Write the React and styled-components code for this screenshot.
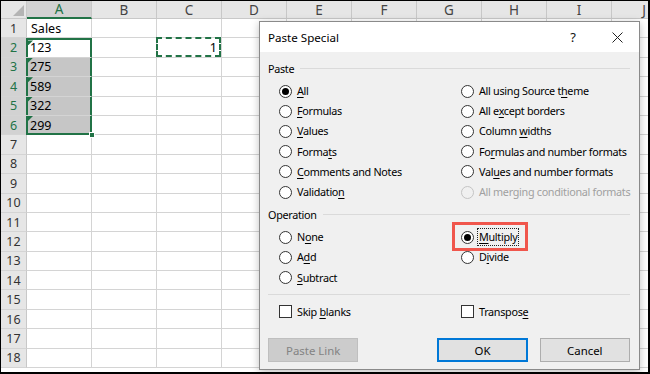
import styled, { createGlobalStyle, css } from "styled-components";

const GlobalStyle = createGlobalStyle`
  html, body {
    margin: 0;
    padding: 0;
    background: #fff;
  }
  * { box-sizing: border-box; }
`

const Screen = styled.div`
  position: relative;
  width: 650px;
  height: 374px;
  overflow: hidden;
  border: 1px solid #000;
  border-right-width: 2px;
  border-bottom-width: 2px;
  background: #fff;
  font-family: "Noto Sans", "Open Sans", sans-serif;
`

/* ---------- sheet ---------- */

const Sheet = styled.div`
  display: grid;
  grid-template-columns: 26px repeat(10, 65px);
  grid-template-rows: 18px;
  grid-auto-rows: 19.4px;
`

const Corner = styled.div`
  position: relative;
  background: #e6e6e6;
  border-right: 1px solid #c8c8c8;
  border-bottom: 1px solid #c8c8c8;
  &::after{
    content: "";
    position: absolute;
    right: 2px;
    bottom: 2px;
    width: 11px;
    height: 11px;
    background: #b4b4b4;
    clip-path: polygon(100% 0, 100% 100%, 0 100%);
  }
`

const ColHead = styled.div`
  display: flex;
  align-items: center;
  justify-content: center;
  font-size: 13.5px;
  color: #444;
  background: #e6e6e6;
  border-right: 1px solid #c8c8c8;
  border-bottom: 1px solid #c8c8c8;
  ${p => p.$active && css`
    background: #d2d2d2;
    color: #217346;
    border-bottom: 2px solid #217346;
  `}
`

const RowHead = styled.div`
  display: flex;
  align-items: center;
  justify-content: center;
  font-size: 12.5px;
  color: #333;
  background: #e6e6e6;
  border-right: 1px solid #c8c8c8;
  border-bottom: 1px solid #d4d4d4;
  ${p => p.$active && css`
    background: #d2d2d2;
    color: #217346;
  `}
`

const Cell = styled.div`
  position: relative;
  display: flex;
  align-items: center;
  justify-content: ${p => p.$right ? "flex-end" : "flex-start"};
  padding: 0 4px;
  font-size: 12.5px;
  color: #000;
  background: ${p => p.$shade ? "#c6c6c6" : "#fff"};
  border-right: 1px solid #d4d4d4;
  border-bottom: 1px solid #d4d4d4;
  ${p => p.$sel && css`
    margin-left: -1px;
    box-shadow:
      inset 2px 0 0 #217346,
      inset -1px 0 0 #217346
      ${p.$sel === "top" ? ", inset 0 2px 0 #217346" : ""}
      ${p.$sel === "bottom" ? ", inset 0 -1px 0 #217346" : ""};
    border-right-color: #217346;
    ${p.$sel === "bottom" ? "border-bottom-color: #217346;" : ""}
  `}
  ${p => p.$marquee && css`
    &::before{
      content: "";
      position: absolute;
      inset: -1px 0 0 -1px;
      border: 2px dashed #217346;
    }
  `}
  ${p => p.$flag && css`
    &::after{
      content: "";
      position: absolute;
      left: 2px;
      top: ${p.$sel === "top" ? "2px" : "0"};
      width: 5px;
      height: 5px;
      background: #1e7145;
      clip-path: polygon(0 0, 100% 0, 0 100%);
    }
  `}
`

const FillHandle = styled.span`
  position: absolute;
  right: -4px;
  bottom: -4px;
  width: 6px;
  height: 6px;
  background: #217346;
  border: 1px solid #fff;
  z-index: 2;
`

/* ---------- dialog ---------- */

const Dialog = styled.section`
  position: absolute;
  left: 258px;
  top: 20px;
  width: 381px;
  height: 349px;
  display: flex;
  flex-direction: column;
  background: #f0f0f0;
  border: 1px solid #8a8a8a;
  box-shadow: 0 2px 8px rgba(0,0,0,0.25);
  font-family: "Noto Sans", "Open Sans", sans-serif;
  font-size: 10.8px;
  letter-spacing: -0.3px;
  color: #000;
`

const TitleBar = styled.header`
  display: flex;
  align-items: center;
  height: 30px;
  padding-left: 8px;
  background: #fff;
  font-size: 11.6px;
  letter-spacing: 0;
`

const Title = styled.span`
  flex: 1;
`

const TitleButton = styled.span`
  display: flex;
  align-items: center;
  justify-content: center;
  width: 44px;
  height: 30px;
  font-size: 13px;
  color: #111;
`

const Body = styled.div`
  flex: 1;
  display: flex;
  flex-direction: column;
  padding: 6px 9px 7px 8px;
`

const GroupHead = styled.div`
  display: flex;
  align-items: center;
  gap: 6px;
  height: 20px;
  margin-top: ${p => p.$mt || "0"};
  &::after{
    content: "";
    flex: 1;
    height: 1px;
    background: #dadada;
  }
`

const Rule = styled.div`
  height: 1px;
  background: #dadada;
  margin: ${p => p.$m || "0"};
`

const Options = styled.div`
  display: grid;
  grid-template-columns: 182px 1fr;
  grid-auto-flow: column;
  grid-template-rows: repeat(${p => p.$rows}, 20.2px);
  justify-items: start;
  padding-left: 11px;
  margin-top: ${p => p.$mt || "3px"};
`

const Option = styled.label`
  position: relative;
  display: flex;
  align-items: center;
  gap: 5px;
  color: ${p => p.$disabled ? "#a0a0a0" : "#000"};
  ${p => p.$flagged && css`
    &::after{
      content: "";
      position: absolute;
      inset: -5px -10px -4px -9px;
      border: 3px solid #f0564c;
    }
  `}
`

const Radio = styled.span`
  position: relative;
  width: 13px;
  height: 13px;
  border-radius: 50%;
  border: 1px solid ${p => p.$disabled ? "#c4c4c4" : "#333"};
  background: ${p => p.$disabled ? "#f0f0f0" : "#fff"};
  flex: none;
  ${p => p.$checked && css`
    &::after{
      content: "";
      position: absolute;
      left: 2px;
      top: 2px;
      width: 7px;
      height: 7px;
      border-radius: 50%;
      background: #000;
    }
  `}
`

const Check = styled.span`
  width: 13px;
  height: 13px;
  border: 1px solid #333;
  background: #fff;
  flex: none;
`

const Label = styled.span`
  white-space: nowrap;
  line-height: 16px;
  ${p => p.$focus && css`
    outline: 1px dotted #222;
    outline-offset: 0;
    padding: 0 1px;
    margin-left: -1px;
  `}
  & u{
    text-underline-offset: 2px;
  }
`

const Buttons = styled.div`
  display: flex;
  align-items: center;
  margin-top: auto;
`

const Button = styled.button`
  width: 91px;
  height: 24px;
  font-family: inherit;
  font-size: 11.4px;
  letter-spacing: 0;
  color: ${p => p.$disabled ? "#838383" : "#000"};
  background: ${p => p.$disabled ? "#cccccc" : "#e1e1e1"};
  border: 1px solid ${p => p.$disabled ? "#bfbfbf" : "#adadad"};
  padding: 0;
  margin-left: ${p => p.$ml || "0"};
  ${p => p.$primary && css`
    border: 2px solid #0078d7;
  `}
`

const CloseIcon = () => (
  <svg width="11" height="11" viewBox="0 0 11 11">
    <path d="M0.5 0.5 L10.5 10.5 M10.5 0.5 L0.5 10.5" stroke="#222" strokeWidth="1" />
  </svg>
)

const columns = ["A", "B", "C", "D", "E", "F", "G", "H", "I", "J"];
const values = { 1: { A: "Sales" }, 2: { A: "123", C: "1" }, 3: { A: "275" }, 4: { A: "589" }, 5: { A: "322" }, 6: { A: "299" } };

function selFor(row){
  if (row === 2) return "top";
  if (row === 6) return "bottom";
  if (row > 2 && row < 6) return "mid";
  return null;
}

function SheetGrid(){
  const rows = Array.from({ length: 18 }, (_, i) => i + 1);
  return (
    <Sheet>
      <Corner />
      {columns.map(c => <ColHead key={c} $active={c === "A"}>{c}</ColHead>)}
      {rows.map(r => [
        <RowHead key={"h" + r} $active={r >= 2 && r <= 6}>{r}</RowHead>,
        ...columns.map(c => {
          const inA = c === "A" && r >= 2 && r <= 6;
          return (
            <Cell
              key={c + r}
              $sel={inA ? selFor(r) : null}
              $shade={inA && r > 2}
              $flag={inA}
              $marquee={c === "C" && r === 2}
              $right={c === "C" && r === 2}
            >
              {values[r] && values[r][c]}
              {inA && r === 6 && <FillHandle />}
            </Cell>
          )
        })
      ])}
    </Sheet>
  )
}

const pasteOptions = [
  { label: <><u>A</u>ll</>, checked: true },
  { label: <><u>F</u>ormulas</> },
  { label: <><u>V</u>alues</> },
  { label: <>Forma<u>t</u>s</> },
  { label: <><u>C</u>omments and Notes</> },
  { label: <>Validatio<u>n</u></> },
  { label: <>All using Source t<u>h</u>eme</> },
  { label: <>All e<u>x</u>cept borders</> },
  { label: <>Column <u>w</u>idths</> },
  { label: <>Fo<u>r</u>mulas and number formats</> },
  { label: <>Val<u>u</u>es and number formats</> },
  { label: <>All merging conditional formats</>, disabled: true },
];

const operationOptions = [
  { label: <>N<u>o</u>ne</> },
  { label: <>A<u>d</u>d</> },
  { label: <><u>S</u>ubtract</> },
  { label: <><u>M</u>ultiply</>, checked: true, flagged: true },
  { label: <>D<u>i</u>vide</> },
];

function RadioOption({ opt }){
  return (
    <Option $disabled={opt.disabled} $flagged={opt.flagged}>
      <Radio $checked={opt.checked} $disabled={opt.disabled} />
      <Label $focus={opt.flagged}>{opt.label}</Label>
    </Option>
  )
}

function PasteSpecial(){
  return (
    <Dialog>
      <TitleBar>
        <Title>Paste Special</Title>
        <TitleButton>?</TitleButton>
        <TitleButton><CloseIcon /></TitleButton>
      </TitleBar>
      <Body>
        <GroupHead>Paste</GroupHead>
        <Options $rows={6}>
          {pasteOptions.map((o, i) => <RadioOption key={i} opt={o} />)}
        </Options>
        <GroupHead $mt="2px">Operation</GroupHead>
        <Options $rows={3}>
          {operationOptions.map((o, i) => <RadioOption key={i} opt={o} />)}
        </Options>
        <Rule $m="6px 0 7px 0" />
        <Options $rows={1} $mt="0">
          <Option><Check /><Label>Skip <u>b</u>lanks</Label></Option>
          <Option><Check /><Label>Transpos<u>e</u></Label></Option>
        </Options>
        <Buttons>
          <Button $disabled>Paste Link</Button>
          <Button $primary $ml="79px">OK</Button>
          <Button $ml="12px">Cancel</Button>
        </Buttons>
      </Body>
    </Dialog>
  )
}

export default function App(){
  return (
    <Screen>
      <GlobalStyle />
      <SheetGrid />
      <PasteSpecial />
    </Screen>
  )
}
